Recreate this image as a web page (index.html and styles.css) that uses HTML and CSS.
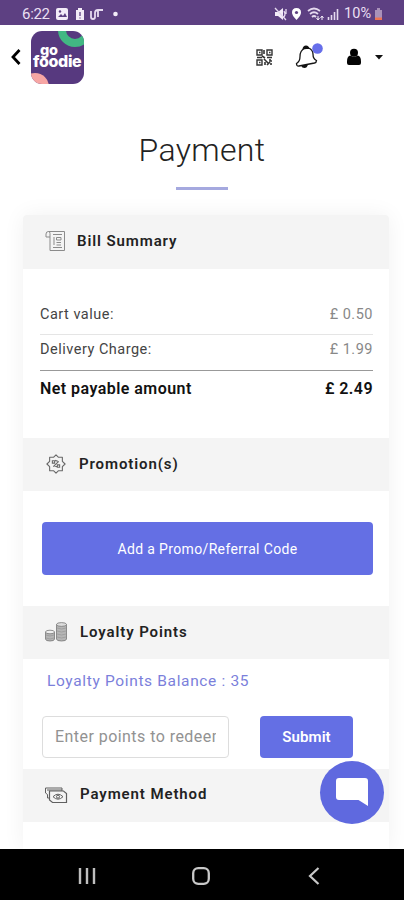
FILE: index.html
```html
<!DOCTYPE html>
<html lang="en">
<head>
<meta charset="utf-8">
<title>Payment</title>
<link rel="stylesheet" href="styles.css">
</head>
<body>
<div class="screen">
  <div class="status">
    <span class="time">6:22</span>
    <svg class="status-left" width="68" height="16" viewBox="0 0 68 16">
      <rect x="1" y="2" width="12" height="12" rx="2" fill="#f3ecf8"/>
      <path d="M3 11l3-3 2 2 2-3 2 4z" fill="#5d4082"/><circle cx="5" cy="5.5" r="1.2" fill="#5d4082"/>
      <path d="M21 4h2V2h4v2h2v10h-8z" fill="#f3ecf8"/><path d="M25 6v4M25 11.500v1" stroke="#5d4082" stroke-width="1.300"/>
      <path d="M36 5v6q0 2 2 2t2-2V7q0-3 3-3h5M43 5v6" fill="none" stroke="#e5d9ef" stroke-width="1.800"/>
      <circle cx="60.500" cy="8" r="2.300" fill="#f3ecf8"/>
    </svg>
    <span class="grow"></span>
    <svg class="status-right" width="66" height="16" viewBox="0 0 66 16">
      <path d="M1 6h3l5-4v12l-5-4H1z" fill="#f3ecf8"/><path d="M1 2l11 12M10 5q2 3 0 6M12 3v5" stroke="#e5d9ef" stroke-width="1.300" fill="none"/>
      <path d="M22.500 2q4.500 0 4.500 4.500 0 3-4.500 7.500-4.500-4.500-4.500-7.500 0-4.500 4.500-4.500" fill="#fff"/><circle cx="22.500" cy="6.500" r="1.600" fill="#5d4082"/>
      <path d="M34 5q6-5 12 0M36 8q4-3.500 8 0M38 11q2-2 4 0" stroke="#e5d9ef" stroke-width="1.800" fill="none"/><path d="M44 10v4M48 10v4M42.500 12l1.500 2 1.500-2M46.500 12l1.500-2 1.500 2" stroke="#f3ecf8" stroke-width="1" fill="none"/>
      <path d="M54.500 14v-3M57.500 14V9M60.500 14V6M63.500 14V3" stroke="#e5d9ef" stroke-width="1.600"/>
    </svg>
    <span class="percent">10%</span>
    <svg class="battery" width="9" height="14" viewBox="0 0 9 14"><path d="M1 3h2V1h3v2h2v10H1z" fill="#a991b9"/><path d="M1 10.500h7V13H1z" fill="#ee7453"/></svg>
  </div>

  <div class="topbar">
    <svg class="back" width="12" height="18" viewBox="0 0 12 18"><path d="M9.500 2L3 9l6.500 7" fill="none" stroke="#000" stroke-width="2.800"/></svg>
    <div class="logo">
      <svg class="logo-bg" width="53" height="53" viewBox="0 0 53 53">
        <rect width="53" height="53" fill="#57397f"/>
        <circle cx="44" cy="-1" r="13" fill="none" stroke="#42b883" stroke-width="8"/>
        <circle cx="4" cy="56" r="14" fill="#f7a6a4"/>
      </svg>
      <span class="logo-go">go</span><span class="logo-foodie">foodie</span>
    </div>
    <span class="grow"></span>
    <svg class="qr" width="17" height="17" viewBox="0 0 17 17" fill="none" stroke="#333">
      <path d="M1 1h5v5H1zM11 1h5v5h-5zM1 11h5v5H1z" stroke-width="1.400"/>
      <path d="M3 3.500h1.500M13 3.500h1.500M3 13.500h1.500M8 1v4M6 7l3 2M1 8.500h5M11 8.500h5M8 10l5 5M9 13v3M11 16l3-3M14 10v2h2M15 14v2" stroke-width="1.600"/>
    </svg>
    <svg class="bell" width="28" height="28" viewBox="0 0 28 28">
      <path d="M9.500 5.500q-4.500 2-4.500 8 0 5-3.500 7 0 3 2.500 2.500l15.500-3q2-.500 2-2.500-3.500-1.500-3.500-6.300 0-4.500-4.500-6.200z" fill="#fff" stroke="#161616" stroke-width="1.300"/>
      <path d="M7.500 6q.500-3.500 3.500-3.500T14.500 6zM6 22.500l7-1q-1 3.500-3.500 3.500T6 22.500z" fill="#111"/>
      <circle cx="22.500" cy="5.500" r="5.300" fill="#666eea"/>
    </svg>
    <svg class="user" width="14" height="18" viewBox="0 0 14 18"><circle cx="7" cy="4.700" r="4" fill="#000"/><path d="M3.500 7.500Q7 10 10.500 7.500q3.500.500 3.500 6V15q0 2-2 2H2q-2 0-2-2v-1.500q0-5.500 3.500-6z" fill="#050505"/></svg>
    <svg class="caret" width="8" height="5" viewBox="0 0 8 5"><path d="M0 0h8L4 4.500z" fill="#111"/></svg>
  </div>

  <h1>Payment</h1>
  <div class="rule"></div>

  <main class="card">
    <h2 class="head bill">
      <svg width="21" height="22" viewBox="0 0 21 22" fill="none" stroke="#8b8b8b">
        <path d="M5 7v13.500h14.500V1.500H3.500Q1 1.500 1 4v3h4V3.500Q5 1.500 3.500 1.500M8 4.500h9M8 17.500h9M9 7v8M11.500 7.500H16v2.500h-4.500zM11.500 12.500H16M11.500 15H16"/>
      </svg>
      <span>Bill Summary</span>
    </h2>
    <div class="bill-body">
      <div class="row cart"><span>Cart value:</span><span class="price">£ 0.50</span></div>
      <div class="row delivery"><span>Delivery Charge:</span><span class="price">£ 1.99</span></div>
      <div class="row net"><span>Net payable amount</span><span class="total">£ 2.49</span></div>
    </div>

    <h2 class="head">
      <svg width="22" height="20" viewBox="0 0 22 22" fill="none" stroke="#686868" stroke-width="1.200">
        <path d="M11 1l2.500 2.500H18V8l3 3-3 3v4.500h-4.500L11 21l-2.500-2.500H4V14l-3-3 3-3V3.500h4.500z" stroke-linejoin="round"/>
        <path d="M8 14l6-6M7 7.500h2.500V10H7zM12.500 12H15v2.500h-2.500zM10 7l3 1M9 13l3 1"/>
      </svg>
      <span>Promotion(s)</span>
    </h2>
    <div class="promo-body"><button class="promo">Add a Promo/Referral Code</button></div>

    <h2 class="head">
      <svg width="23" height="22" viewBox="0 0 23 22" stroke="#777" stroke-width=".8" fill="#b5b5b5">
        <path d="M.5 11v7q0 2 4.500 2t4.500-2v-7z"/><ellipse cx="5" cy="11" rx="4.500" ry="1.800" fill="#eee"/>
        <path d="M11.500 3.500V18q0 2 5 2t5-2V3.500z"/><ellipse cx="16.500" cy="3.500" rx="5" ry="1.900" fill="#ddd"/>
        <path d="M1 14q4 2 8 0M1 17q4 2 8 0M12 7q4.500 2 9 0M12 10q4.500 2 9 0M12 13q4.500 2 9 0M12 16q4.500 2 9 0" fill="none" stroke="#999"/>
      </svg>
      <span>Loyalty Points</span>
    </h2>
    <div class="loyalty-body">
      <div class="balance">Loyalty Points Balance : 35</div>
      <div class="redeem">
        <div class="field"><span>Enter points to redeem</span></div>
        <button class="submit">Submit</button>
      </div>
    </div>

    <h2 class="head method">
      <svg width="23" height="22" viewBox="0 0 23 22" fill="none" stroke="#606060">
        <path d="M4.500 15H2.500V11.500L.5 10V5H17V8M2 7h15"/>
        <path d="M4.500 8h14l3 2.500v9H7.500l-3-2.500z" stroke-width="1.200"/><path d="M8 13.700q5-5 10 0-5 5-10 0z"/><circle cx="13" cy="13.700" r="1.500"/>
      </svg>
      <span>Payment Method</span>
    </h2>
  </main>

  <div class="chat">
    <svg width="32" height="28" viewBox="0 0 32 28"><path d="M3 0h26q3 0 3 3v25l-9.500-6H3q-3 0-3-3V3q0-3 3-3z" fill="#fff"/></svg>
  </div>

  <nav class="nav">
    <svg width="18" height="18" viewBox="0 0 18 18"><path d="M2 1v16M9 1v16M16 1v16" stroke="#bebebe" stroke-width="2.400"/></svg>
    <svg width="18" height="18" viewBox="0 0 18 18"><rect x="1.200" y="1.200" width="15.600" height="15.600" rx="5" fill="none" stroke="#c8c8c8" stroke-width="2.300"/></svg>
    <svg width="18" height="18" viewBox="0 0 18 18"><path d="M13.500 1L5 9l8.500 8" fill="none" stroke="#c8c8c8" stroke-width="2.200"/></svg>
  </nav>
</div>
</body>
</html>
```

FILE: styles.css
```css
* { box-sizing: border-box; }
body { margin: 0; background: #fff; font-family: Roboto, "Liberation Sans", sans-serif; }
svg { display: block; flex: none; }
button { border: 0; padding: 0; margin: 0; font-family: inherit; color: #fff; background: #646fe4; border-radius: 4px; }
.grow { flex: 1; }
.screen { position: relative; width: 404px; height: 900px; overflow: hidden; display: flex; flex-direction: column; }

.status { flex: none; height: 25px; background: #5d4082; display: flex; align-items: center; padding: 3px 21px 0 22px; color: #eadff2; }
.time { width: 28px; font-size: 15px; line-height: 20px; letter-spacing: -.3px; }
.status-left { margin-left: 5px; }
.percent { width: 28px; margin-left: 4px; font-size: 14.500px; line-height: 20px; letter-spacing: .1px; }
.battery { margin-left: 2px; }

.topbar { flex: none; height: 65px; display: flex; align-items: center; padding: 0 21px 1px 10px; }
.back { margin-right: 9px; }
.logo { position: relative; width: 53px; height: 53px; border-radius: 11px; overflow: hidden; color: #fff; font-weight: 800; }
.logo-go, .logo-foodie { position: absolute; font-family: Inter, Roboto, sans-serif; line-height: 10px; }
.logo-go { left: 9px; top: 14px; font-size: 14.500px; letter-spacing: -.3px; }
.logo-foodie { left: 2px; top: 25px; font-size: 16px; letter-spacing: -.35px; }
.qr { margin-right: 22px; }
.bell { margin-right: 24px; }
.user { margin-right: 14px; }

h1 { flex: none; margin: 40px 0 0; height: 40px; text-align: center; font-size: 32px; line-height: 40px; font-weight: 300; letter-spacing: .350px; color: #222; }
.rule { flex: none; width: 52px; height: 3px; margin: 17px auto 0 176px; background: #a5a9df; }

.card { flex: none; width: 366px; height: 634px; margin: 25px 0 0 23px; background: #fff; border-radius: 4px 4px 0 0; box-shadow: 0 0 22px rgba(0, 0, 0, .06); }
.head { margin: 0; height: 53px; padding: 0 0 1px 22px; display: flex; align-items: center; gap: 12px; background: #f4f4f4; font-size: 15px; font-weight: 600; letter-spacing: .9px; color: #222; }
.head.bill { height: 54px; padding-bottom: 2px; gap: 11px; border-radius: 4px 4px 0 0; }
.head.method { padding-bottom: 3px; }

.bill-body { height: 169px; padding: 30px 16px 0 17px; }
.row { display: flex; justify-content: space-between; align-items: center; font-size: 14.500px; letter-spacing: .5px; color: #444; }
.cart { height: 36px; padding-bottom: 8px; padding-top: 3px; border-bottom: 1px solid #e5e5e5; }
.delivery { height: 36px; padding-bottom: 7px; border-bottom: 1px solid #999; }
.net { height: 34px; font-size: 16px; font-weight: 600; letter-spacing: .45px; color: #111; }
.price { color: #888; }

.promo-body { height: 115px; padding: 31px 16px 0 19px; }
.promo { display: block; width: 331px; height: 53px; font-size: 14px; letter-spacing: .350px; }

.loyalty-body { height: 110px; padding: 11px 36px 0 19px; }
.balance { height: 22px; padding-left: 5px; line-height: 22px; font-size: 15.500px; letter-spacing: .65px; color: #7b7fdb; }
.redeem { display: flex; justify-content: space-between; margin-top: 24px; }
.field { width: 187px; height: 42px; padding: 0 12px; border: 1px solid #ddd; border-radius: 4px; font-size: 16px; line-height: 40px; letter-spacing: .45px; color: #929292; }
.field span { display: block; overflow: hidden; white-space: nowrap; }
.submit { width: 93px; height: 42px; font-size: 15px; font-weight: 600; letter-spacing: .1px; }

.chat { position: absolute; left: 320px; top: 761px; width: 64px; height: 63px; border-radius: 50%; background: #5f69df; display: flex; align-items: center; justify-content: center; padding-bottom: 1px; }
.nav { position: relative; flex: none; height: 51px; background: #000; display: flex; justify-content: space-between; align-items: center; padding: 2px 81px 0 78px; }
```
